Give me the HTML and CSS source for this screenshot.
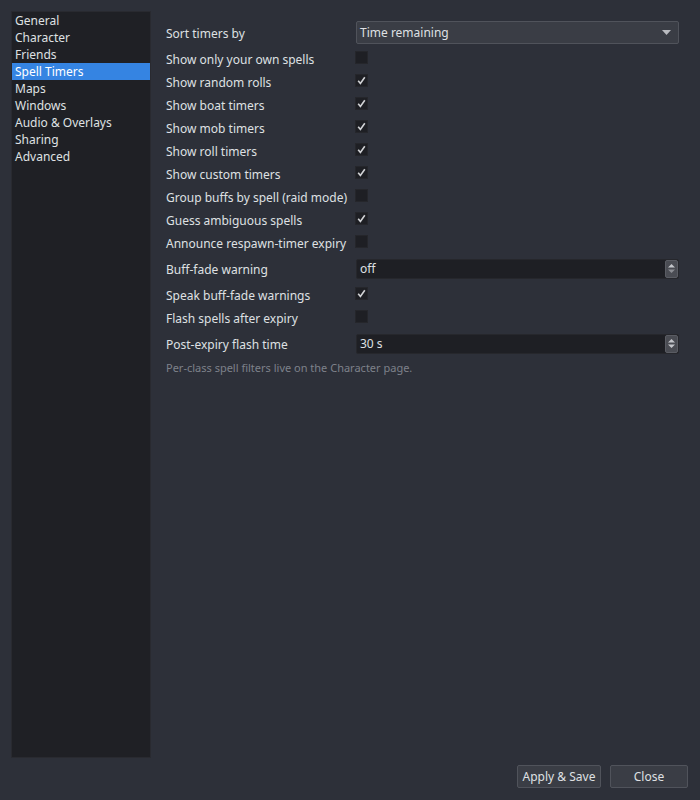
FILE: index.html
```html
<!DOCTYPE html>
<html>
<head>
<meta charset="utf-8">
<link rel="stylesheet" href="styles.css">
</head>
<body>
<div class="window">
  <div class="main">
    <ul class="sidebar">
      <li>General</li>
      <li>Character</li>
      <li>Friends</li>
      <li class="active">Spell Timers</li>
      <li>Maps</li>
      <li>Windows</li>
      <li>Audio &amp; Overlays</li>
      <li>Sharing</li>
      <li>Advanced</li>
    </ul>
    <div class="form">
      <div class="label">Sort timers by</div>
      <div class="combo"><span>Time remaining</span><svg class="arrow" width="9" height="5" viewBox="0 0 9 5"><path d="M0 0H9L4.5 5Z" fill="#b9bbc0"/></svg></div>

      <div class="label">Show only your own spells</div>
      <div class="cbwrap"><span class="cb"></span></div>

      <div class="label">Show random rolls</div>
      <div class="cbwrap"><span class="cb"><svg width="13" height="13" viewBox="0 0 13 13"><path d="M3.2 6.8L5.4 9.5L9.8 3.2" fill="none" stroke="#d2d3d6" stroke-width="1.6"/></svg></span></div>

      <div class="label">Show boat timers</div>
      <div class="cbwrap"><span class="cb"><svg width="13" height="13" viewBox="0 0 13 13"><path d="M3.2 6.8L5.4 9.5L9.8 3.2" fill="none" stroke="#d2d3d6" stroke-width="1.6"/></svg></span></div>

      <div class="label">Show mob timers</div>
      <div class="cbwrap"><span class="cb"><svg width="13" height="13" viewBox="0 0 13 13"><path d="M3.2 6.8L5.4 9.5L9.8 3.2" fill="none" stroke="#d2d3d6" stroke-width="1.6"/></svg></span></div>

      <div class="label">Show roll timers</div>
      <div class="cbwrap"><span class="cb"><svg width="13" height="13" viewBox="0 0 13 13"><path d="M3.2 6.8L5.4 9.5L9.8 3.2" fill="none" stroke="#d2d3d6" stroke-width="1.6"/></svg></span></div>

      <div class="label">Show custom timers</div>
      <div class="cbwrap"><span class="cb"><svg width="13" height="13" viewBox="0 0 13 13"><path d="M3.2 6.8L5.4 9.5L9.8 3.2" fill="none" stroke="#d2d3d6" stroke-width="1.6"/></svg></span></div>

      <div class="label">Group buffs by spell (raid mode)</div>
      <div class="cbwrap"><span class="cb"></span></div>

      <div class="label">Guess ambiguous spells</div>
      <div class="cbwrap"><span class="cb"><svg width="13" height="13" viewBox="0 0 13 13"><path d="M3.2 6.8L5.4 9.5L9.8 3.2" fill="none" stroke="#d2d3d6" stroke-width="1.6"/></svg></span></div>

      <div class="label">Announce respawn-timer expiry</div>
      <div class="cbwrap"><span class="cb"></span></div>

      <div class="label">Buff-fade warning</div>
      <div class="spinwrap"><div class="spin"><span>off</span><span class="spinbtn"><svg width="9" height="13" viewBox="0 0 9 13"><path d="M1 5.5H8L4.5 2Z" fill="#c4c6cb"/><path d="M1 7.5H8L4.5 11Z" fill="#8a8c92"/></svg></span></div></div>

      <div class="label">Speak buff-fade warnings</div>
      <div class="cbwrap"><span class="cb"><svg width="13" height="13" viewBox="0 0 13 13"><path d="M3.2 6.8L5.4 9.5L9.8 3.2" fill="none" stroke="#d2d3d6" stroke-width="1.6"/></svg></span></div>

      <div class="label">Flash spells after expiry</div>
      <div class="cbwrap"><span class="cb"></span></div>

      <div class="label">Post-expiry flash time</div>
      <div class="spinwrap"><div class="spin"><span>30 s</span><span class="spinbtn"><svg width="9" height="13" viewBox="0 0 9 13"><path d="M1 5.5H8L4.5 2Z" fill="#c4c6cb"/><path d="M1 7.5H8L4.5 11Z" fill="#c4c6cb"/></svg></span></div></div>

      <div class="hint">Per-class spell filters live on the Character page.</div>
    </div>
  </div>
  <div class="footer">
    <button class="btn apply">Apply &amp; Save</button>
    <button class="btn close">Close</button>
  </div>
</div>
</body>
</html>
```
FILE: styles.css
```css
html, body {
  margin: 0;
  padding: 0;
  background: #2d3039;
}
body {
  font-family: "Noto Sans", "Open Sans", sans-serif;
  font-size: 12px;
  line-height: 17px;
  color: #dfe0e3;
}
.window {
  height: 800px;
  box-sizing: border-box;
  padding: 11px 12px 12px 11px;
  display: flex;
  flex-direction: column;
}
.main {
  flex: 1;
  display: flex;
  min-height: 0;
}
.sidebar {
  list-style: none;
  margin: 0;
  padding: 0;
  width: 140px;
  box-sizing: border-box;
  border: 1px solid #292a30;
  background: #1f2025;
}
.sidebar li {
  height: 17px;
  line-height: 17px;
  padding-left: 3px;
  white-space: nowrap;
}
.sidebar li.active {
  background: #3584e2;
  color: #ffffff;
}
.form {
  flex: 1;
  padding: 10px 9px 0 15px;
  display: grid;
  grid-template-columns: 190px 1fr;
  grid-auto-rows: auto;
  row-gap: 6px;
  align-content: start;
}
.label {
  display: flex;
  align-items: center;
  white-space: nowrap;
  line-height: 15px;
  padding-top: 2px;
}
.combo {
  height: 23px;
  box-sizing: border-box;
  border: 1px solid #50535b;
  border-radius: 2px;
  background: #3a3d45;
  display: flex;
  align-items: center;
  justify-content: space-between;
  padding: 0 6px 0 3px;
}
.combo .arrow {
  margin-right: 1px;
}
.cbwrap {
  height: 17px;
  display: flex;
  align-items: flex-start;
  margin-left: -1px;
}
.cb {
  width: 13px;
  height: 13px;
  margin-top: 1px;
  box-sizing: border-box;
  background: #1e1f24;
  border: 1px solid #25262b;
  display: block;
  position: relative;
}
.cb svg {
  position: absolute;
  left: -1px;
  top: -1px;
}
.spinwrap {
  height: 23px;
  display: flex;
  align-items: center;
}
.spin {
  flex: 1;
  height: 20px;
  box-sizing: border-box;
  background: #1e1f24;
  border: 1px solid #26272c;
  border-radius: 2px;
  display: flex;
  align-items: center;
  justify-content: space-between;
  padding-left: 3px;
}
.spinbtn {
  width: 13px;
  height: 18px;
  box-sizing: border-box;
  background: #4a4c53;
  border: 1px solid #5a5c63;
  border-radius: 2px;
  display: flex;
  align-items: center;
  justify-content: center;
}
.hint {
  grid-column: 1 / span 2;
  font-size: 11px;
  color: #7d818a;
  line-height: 13px;
}
.footer {
  margin-top: 7px;
  display: flex;
  justify-content: flex-end;
  gap: 9px;
}
.btn {
  height: 23px;
  box-sizing: border-box;
  background: #3a3d45;
  border: 1px solid #50535b;
  border-radius: 2px;
  color: #dfe0e3;
  font-family: "Noto Sans", "Open Sans", sans-serif;
  font-size: 12px;
  padding: 0;
}
.apply { width: 84px; }
.close { width: 78px; }
```
